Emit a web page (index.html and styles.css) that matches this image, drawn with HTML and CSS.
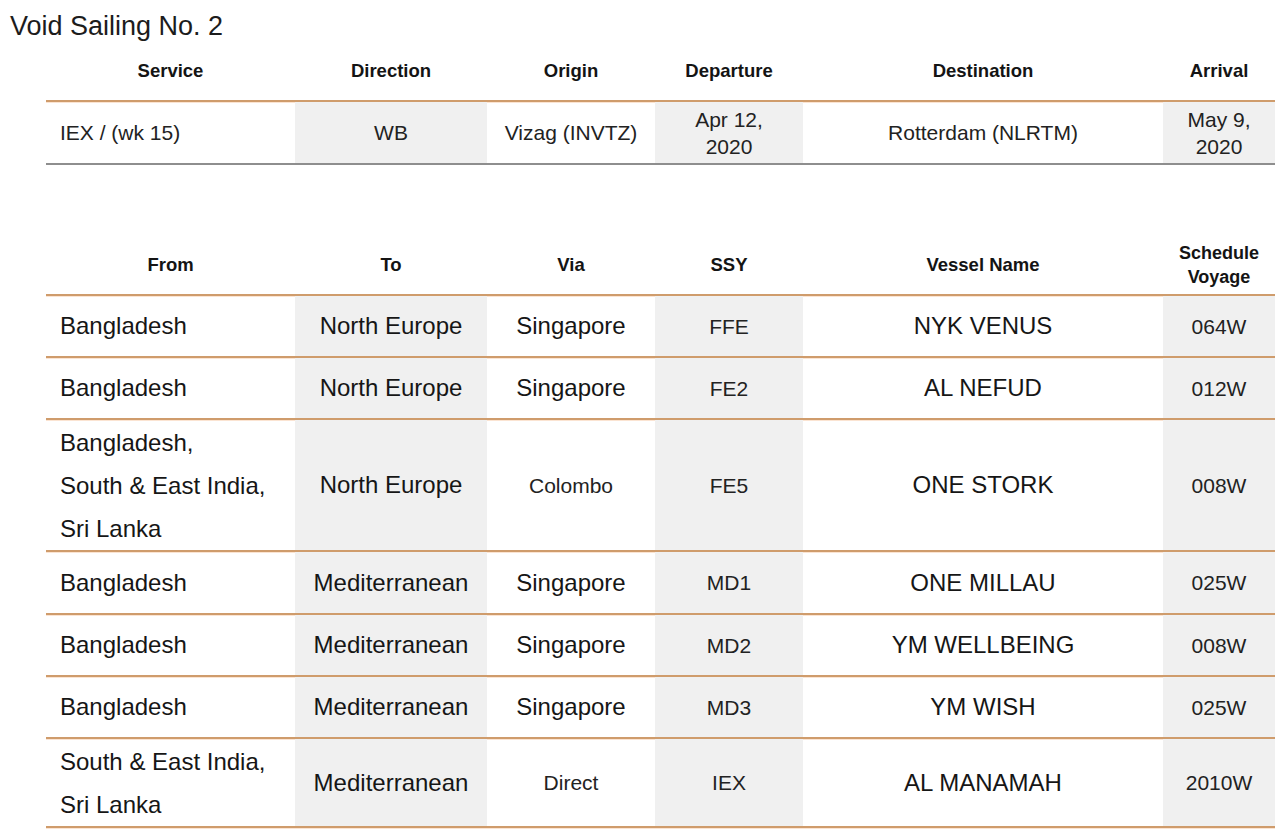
FILE: index.html
```html
<!DOCTYPE html>
<html lang="en">
<head>
<meta charset="utf-8">
<title>Void Sailing No. 2</title>
<link rel="stylesheet" href="styles.css">
</head>
<body>
<h1 class="title">Void Sailing No. 2</h1>

<div class="table t1">
  <div class="row head">
    <div class="cell">Service</div>
    <div class="cell">Direction</div>
    <div class="cell">Origin</div>
    <div class="cell">Departure</div>
    <div class="cell">Destination</div>
    <div class="cell">Arrival</div>
  </div>
  <div class="row body last-grey">
    <div class="cell left sm">IEX / (wk 15)</div>
    <div class="cell shade sm">WB</div>
    <div class="cell sm">Vizag (INVTZ)</div>
    <div class="cell shade sm two">Apr 12,<br>2020</div>
    <div class="cell sm">Rotterdam (NLRTM)</div>
    <div class="cell shade sm two">May 9,<br>2020</div>
  </div>
</div>

<div class="table t2">
  <div class="row head">
    <div class="cell">From</div>
    <div class="cell">To</div>
    <div class="cell">Via</div>
    <div class="cell">SSY</div>
    <div class="cell">Vessel Name</div>
    <div class="cell two-h">Schedule<br>Voyage</div>
  </div>
  <div class="row body">
    <div class="cell left lg">Bangladesh</div>
    <div class="cell shade lg">North Europe</div>
    <div class="cell lg">Singapore</div>
    <div class="cell shade sm">FFE</div>
    <div class="cell lg">NYK VENUS</div>
    <div class="cell shade sm">064W</div>
  </div>
  <div class="row body">
    <div class="cell left lg">Bangladesh</div>
    <div class="cell shade lg">North Europe</div>
    <div class="cell lg">Singapore</div>
    <div class="cell shade sm">FE2</div>
    <div class="cell lg">AL NEFUD</div>
    <div class="cell shade sm">012W</div>
  </div>
  <div class="row body tall3">
    <div class="cell left lg multi">Bangladesh,<br>South &amp; East India,<br>Sri Lanka</div>
    <div class="cell shade lg">North Europe</div>
    <div class="cell sm">Colombo</div>
    <div class="cell shade sm">FE5</div>
    <div class="cell lg">ONE STORK</div>
    <div class="cell shade sm">008W</div>
  </div>
  <div class="row body row61">
    <div class="cell left lg">Bangladesh</div>
    <div class="cell shade lg">Mediterranean</div>
    <div class="cell lg">Singapore</div>
    <div class="cell shade sm">MD1</div>
    <div class="cell lg">ONE MILLAU</div>
    <div class="cell shade sm">025W</div>
  </div>
  <div class="row body">
    <div class="cell left lg">Bangladesh</div>
    <div class="cell shade lg">Mediterranean</div>
    <div class="cell lg">Singapore</div>
    <div class="cell shade sm">MD2</div>
    <div class="cell lg">YM WELLBEING</div>
    <div class="cell shade sm">008W</div>
  </div>
  <div class="row body">
    <div class="cell left lg">Bangladesh</div>
    <div class="cell shade lg">Mediterranean</div>
    <div class="cell lg">Singapore</div>
    <div class="cell shade sm">MD3</div>
    <div class="cell lg">YM WISH</div>
    <div class="cell shade sm">025W</div>
  </div>
  <div class="row body tall2">
    <div class="cell left lg multi">South &amp; East India,<br>Sri Lanka</div>
    <div class="cell shade lg">Mediterranean</div>
    <div class="cell sm">Direct</div>
    <div class="cell shade sm">IEX</div>
    <div class="cell lg">AL MANAMAH</div>
    <div class="cell shade sm">2010W</div>
  </div>
</div>
</body>
</html>
```

FILE: styles.css
```css
html, body {
  margin: 0;
  padding: 0;
  background: #ffffff;
}

body {
  font-family: "Liberation Sans", Arial, sans-serif;
  color: #1a1a1a;
  width: 1280px;
  height: 834px;
  overflow: hidden;
}

.title {
  margin: 0;
  padding: 11px 0 0 10px;
  height: 35px;
  font-size: 27px;
  font-weight: 400;
  line-height: 30px;
  color: #1c1c1c;
}

.table {
  margin-left: 46px;
  width: 1229px;
}

.t2 {
  margin-top: 66px;
}

.row {
  display: grid;
  grid-template-columns: 249px 192px 168px 148px 360px 112px;
  border-bottom: 2px solid #cf9c6c;
  box-shadow: 0 1px 0 #fbe4d2;
}

.row.head {
  height: 54px;
}

.head .cell {
  align-items: flex-end;
  padding-bottom: 17px;
}

.head .cell.two-h {
  padding-bottom: 5px;
}

.t2 .row.head {
  height: 63px;
}

.row.body {
  height: 60px;
}

.row.row61 {
  height: 61px;
}

.row.tall3 {
  height: 130px;
}

.row.tall2 {
  height: 87px;
}

.row.last-grey {
  height: 61px;
  border-bottom-color: #8e8e8e;
  box-shadow: none;
}

.cell {
  display: flex;
  align-items: center;
  justify-content: center;
  text-align: center;
}

.head .cell {
  font-weight: 700;
  font-size: 18.5px;
  line-height: 24px;
  color: #141414;
  box-sizing: border-box;
}

.head .cell.two-h {
  font-size: 18px;
}

.cell.left {
  justify-content: flex-start;
  text-align: left;
  padding-left: 14px;
}

.cell.shade {
  background: #f0f0f0;
}

.cell.sm {
  font-size: 21px;
  line-height: 27px;
  color: #222222;
}

.cell.lg {
  font-size: 24px;
  line-height: 30px;
  color: #161616;
}

.cell.multi {
  line-height: 43px;
}
```
